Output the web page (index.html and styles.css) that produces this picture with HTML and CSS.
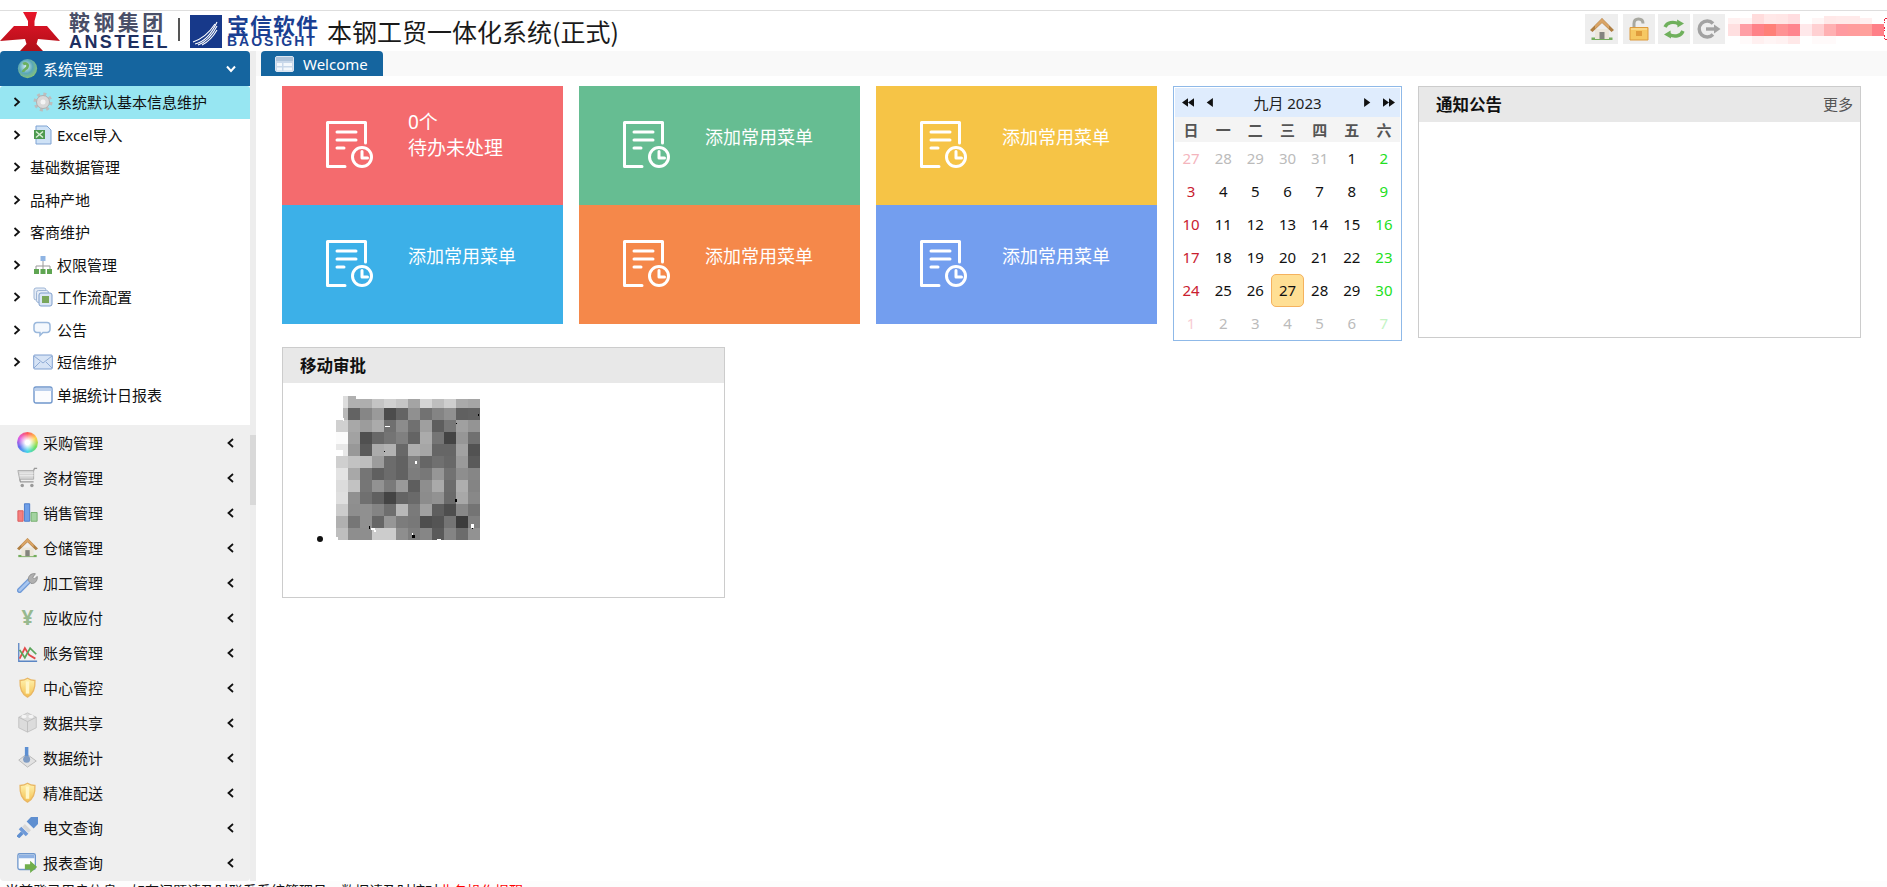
FILE: index.html
```html
<!DOCTYPE html>
<html lang="zh">
<head>
<meta charset="utf-8">
<title>本钢工贸一体化系统(正式)</title>
<link rel="stylesheet" href="styles.css">
</head>
<body>
<svg class="sprite" aria-hidden="true">
  <defs>
    <linearGradient id="gold" x1="0" y1="0" x2="0" y2="1"><stop offset="0" stop-color="#fff3b0"/><stop offset="1" stop-color="#f4c04f"/></linearGradient>
    <linearGradient id="redg" x1="0" y1="0" x2="0" y2="1"><stop offset="0" stop-color="#e8152a"/><stop offset="1" stop-color="#b00f18"/></linearGradient>
    <radialGradient id="globe" cx=".42" cy=".4" r=".65"><stop offset="0" stop-color="#d6eef5"/><stop offset=".55" stop-color="#5aa8b8"/><stop offset="1" stop-color="#8cc66e"/></radialGradient>
    <symbol id="doc" viewBox="0 0 47 47">
      <g fill="none" stroke="#fff" stroke-width="3" stroke-linecap="round" stroke-linejoin="round">
        <path d="M19 45.500H1.500V1.500H39.500V22"/>
        <path d="M11 11H30M11 19H30M11 27H18"/>
        <circle cx="36" cy="36" r="9.500"/>
        <path d="M36 30.500V37H41.500"/>
      </g>
    </symbol>
    <symbol id="home" viewBox="0 0 24 24">
      <path d="M1.500 20.500h21V23h-21z" fill="#74ad5c"/>
      <path d="M5 12h14v10H5z" fill="#ece7da"/>
      <path d="M9.500 15h5v7h-5z" fill="#84847e"/>
      <path d="M0 13 12 1l12 12-2.500 2L12 6 2.500 15z" fill="#b07f42"/>
      <path d="M12 1.500 5 8.500v3.500l7-6.500 7 6.500V8.500z" fill="#d9a466"/>
    </symbol>
    <symbol id="shield" viewBox="0 0 24 24">
      <path d="M12 1.500c2 1.500 5 2.500 8.500 2.500 .5 8-1 15-8.500 19C4.500 19 3 12 3.500 4 7 4 10 3 12 1.500z" fill="url(#gold)" stroke="#e9b765" stroke-width="1.500"/>
      <path d="M12 5v14" stroke="#fff6c8" stroke-width="4"/>
    </symbol>
  </defs>
</svg>

<div class="app">
  <header class="header">
    <div class="brand">
      <svg class="mark" viewBox="0 0 65 39"><path d="M23 0H37L34.500 9V14H47L60 29L38 27L36.500 32L43 39H20L26.500 32L25 27L0 29L14 14H28V9Z" fill="url(#redg)"/></svg>
      <div class="stack ansteel">
        <span class="cn">鞍钢集团</span>
        <span class="en">ANSTEEL</span>
      </div>
      <i class="divider"></i>
      <svg class="bird" viewBox="0 0 32 33">
        <path d="M0 0H32V33H0Z" fill="#17398a"/>
        <g stroke="#fff" stroke-width="1.100" fill="none">
          <path d="M5 29C14 27 21 20 27 7"/><path d="M8 30C16 27 22 21 27 11"/><path d="M3 27C12 24 19 18 25 9"/><path d="M12 30C18 27 23 22 27 15"/>
        </g>
      </svg>
      <div class="stack baosight">
        <span class="cn">宝信软件</span>
        <span class="en">BAOSIGHT</span>
      </div>
      <h1 class="title">本钢工贸一体化系统(正式)</h1>
    </div>
    <div class="tools">
      <button class="tool t-wide"><svg class="tool-icon"><use href="#home"/></svg></button>
      <button class="tool t-gap">
        <svg class="tool-icon" viewBox="0 0 24 24">
          <path d="M7 11V6.500C7 3 9 2 11.500 2S16 3 16 6.500" fill="none" stroke="#a8a8a0" stroke-width="3"/>
          <path d="M3 10.500h18V23H3z" fill="#f6c862" stroke="#dd9a3c"/>
          <path d="M9 14h6v5H9z" fill="#e09c3c"/><path d="M4 12h16" stroke="#fbe6ae"/>
        </svg>
      </button>
      <button class="tool">
        <svg class="tool-icon" viewBox="0 0 24 24" fill="none" stroke="#6fb05c" stroke-width="3.400">
          <path d="M3 10C5 5.500 11 4 17 7"/><path d="M21 14C19 19 13 20.500 7 17.500"/>
          <path d="M15 2.500l7 4-6.500 4z" fill="#6fb05c" stroke="none"/><path d="M9 21.500l-7-4 6.500-4z" fill="#6fb05c" stroke="none"/>
        </svg>
      </button>
      <button class="tool">
        <svg class="tool-icon" viewBox="0 0 24 24" fill="none" stroke="#a2a2a2" stroke-width="3.400">
          <path d="M16 6.500A8 8 0 1 0 16 17.500"/><path d="M9 12h9"/>
          <path d="M17 7.500l6.500 4.500-6.500 4.500z" fill="#a2a2a2" stroke="none"/>
        </svg>
      </button>
      <svg class="redact" viewBox="0 0 162 30" shape-rendering="crispEdges">
        <g transform="translate(3 0)">
          <rect x="0" y="4" class="c" fill="#fff0f0"/><rect x="12" y="4" class="c" fill="#fff5f5"/><rect x="24" y="0" class="c h" fill="#ffdcdc"/><rect x="36" y="0" class="c h" fill="#ffe8e8"/><rect x="48" y="0" class="c h" fill="#ffe6e6"/><rect x="60" y="0" class="c h" fill="#ffdde0"/><rect x="84" y="4" class="c" fill="#fff5f5"/><rect x="96" y="2" class="c" fill="#ffe8e8"/><rect x="108" y="2" class="c" fill="#ffeaea"/><rect x="120" y="2" class="c" fill="#ffeaea"/><rect x="132" y="4" class="c" fill="#fff0f0"/>
          <rect x="0" y="10" class="c" fill="#ffdfe0"/><rect x="12" y="10" class="c" fill="#ff9ea5"/><rect x="24" y="10" class="c" fill="#ff8288"/><rect x="36" y="10" class="c" fill="#ff8078"/><rect x="48" y="10" class="c" fill="#ff9294"/><rect x="60" y="10" class="c" fill="#ff858e"/><rect x="72" y="10" class="c" fill="#ffe8ea"/><rect x="84" y="10" class="c" fill="#ffd0d2"/><rect x="96" y="10" class="c" fill="#ffb0b2"/><rect x="108" y="10" class="c" fill="#ff9aa0"/><rect x="120" y="10" class="c" fill="#ff9c9c"/><rect x="132" y="10" class="c" fill="#ffa09c"/><rect x="144" y="10" class="c" fill="#ff8088"/>
          <rect x="12" y="22" class="c b" fill="#fffafa"/><rect x="24" y="22" class="c b" fill="#fff0f0"/><rect x="36" y="22" class="c b" fill="#fff5f5"/><rect x="48" y="22" class="c b" fill="#fff2f2"/><rect x="60" y="22" class="c b" fill="#ffe8e8"/><rect x="84" y="22" class="c b" fill="#fffafa"/><rect x="96" y="22" class="c b" fill="#fffafa"/>
        </g>
        <path d="M159 5v4M159 13v4M159 21v4M160 4h2M160 25h2" stroke="#f0203a" stroke-dasharray="2 1"/>
      </svg>
    </div>
  </header>

  <div class="body">
    <aside class="side">
      <nav class="side-menu">
        <div class="acc acc-open">
          <svg class="acc-icon" viewBox="0 0 24 24"><circle cx="12" cy="12" r="11" fill="url(#globe)"/><path d="M7 7c3-2 6 0 5 3s-5 3-5 6" fill="none" stroke="#6bb060" stroke-width="3"/></svg>
          <span class="acc-label">系统管理</span>
          <svg class="chev chev-down" viewBox="0 0 10 8"><path d="M1 1.500 5 6l4-4.500" fill="none" stroke="#fff" stroke-width="2"/></svg>
        </div>
        <div class="subs">
          <a class="sub sub-active"><svg class="chev-r" viewBox="0 0 8 10"><path d="M1.500 1 6 5 1.500 9" fill="none" stroke="#111" stroke-width="1.800"/></svg>
            <svg class="sub-icon" viewBox="0 0 20 20"><circle cx="10" cy="10" r="8" fill="none" stroke="#bdbdbd" stroke-width="3" stroke-dasharray="3 3.300"/><circle cx="10" cy="10" r="6.500" fill="#d8d8d8" stroke="#b0b0b0"/><circle cx="10" cy="10" r="2.500" fill="#f4f4f4"/></svg>
            系统默认基本信息维护</a>
          <a class="sub"><svg class="chev-r" viewBox="0 0 8 10"><path d="M1.500 1 6 5 1.500 9" fill="none" stroke="#111" stroke-width="1.800"/></svg>
            <svg class="sub-icon" viewBox="0 0 20 20"><path d="M3 1h11l4 4v14H3z" fill="#cfe2f6" stroke="#7ea3d3"/><path d="M1 5h11v9H1z" fill="#4d9a50"/><path d="M3 6.500 10 12.500M10 6.500 3 12.500" stroke="#d9efd4" stroke-width="1.500"/></svg>
            Excel导入</a>
          <a class="sub"><svg class="chev-r" viewBox="0 0 8 10"><path d="M1.500 1 6 5 1.500 9" fill="none" stroke="#111" stroke-width="1.800"/></svg>基础数据管理</a>
          <a class="sub"><svg class="chev-r" viewBox="0 0 8 10"><path d="M1.500 1 6 5 1.500 9" fill="none" stroke="#111" stroke-width="1.800"/></svg>品种产地</a>
          <a class="sub"><svg class="chev-r" viewBox="0 0 8 10"><path d="M1.500 1 6 5 1.500 9" fill="none" stroke="#111" stroke-width="1.800"/></svg>客商维护</a>
          <a class="sub"><svg class="chev-r" viewBox="0 0 8 10"><path d="M1.500 1 6 5 1.500 9" fill="none" stroke="#111" stroke-width="1.800"/></svg>
            <svg class="sub-icon" viewBox="0 0 20 20"><path d="M10 6v5M3 14v-3h14v3M10 11v3" fill="none" stroke="#999"/><path d="M7.500 1h5v5h-5z" fill="#8fb4e3"/><path d="M1 14h5v5H1zM7.500 14h5v5h-5zM14 14h5v5h-5z" fill="#5fa552"/></svg>
            权限管理</a>
          <a class="sub"><svg class="chev-r" viewBox="0 0 8 10"><path d="M1.500 1 6 5 1.500 9" fill="none" stroke="#111" stroke-width="1.800"/></svg>
            <svg class="sub-icon" viewBox="0 0 20 20"><rect x="1" y="1" width="12" height="12" rx="2" fill="#e5ecf6" stroke="#9fb6d6"/><rect x="3.500" y="3.500" width="12" height="12" rx="2" fill="#e5ecf6" stroke="#9fb6d6"/><rect x="6" y="6" width="13" height="13" rx="2" fill="#dbe6f5" stroke="#7f9ecb"/><path d="M9 9h7v7H9z" fill="#79a65a"/></svg>
            工作流配置</a>
          <a class="sub"><svg class="chev-r" viewBox="0 0 8 10"><path d="M1.500 1 6 5 1.500 9" fill="none" stroke="#111" stroke-width="1.800"/></svg>
            <svg class="sub-icon" viewBox="0 0 20 20"><path d="M4 2.500h10a3 3 0 0 1 3 3v4a3 3 0 0 1-3 3h-4l-3 3v-3H4a3 3 0 0 1-3-3v-4a3 3 0 0 1 3-3z" fill="#f4f8fd" stroke="#9ab8dc" stroke-width="1.500"/></svg>
            公告</a>
          <a class="sub"><svg class="chev-r" viewBox="0 0 8 10"><path d="M1.500 1 6 5 1.500 9" fill="none" stroke="#111" stroke-width="1.800"/></svg>
            <svg class="sub-icon" viewBox="0 0 20 20"><rect x=".7" y="3" width="18.600" height="14" rx="1" fill="#d6e3f5" stroke="#7f9fd0"/><path d="M1 4l9 7 9-7M1 16l6-6M19 16l-6-6" fill="none" stroke="#8fabd5"/></svg>
            短信维护</a>
          <a class="sub"><span class="chev-none"></span>
            <svg class="sub-icon" viewBox="0 0 20 20"><rect x="1" y="2" width="18" height="16" rx="2" fill="#fbfcfe" stroke="#7097cc" stroke-width="1.400"/><path d="M1.500 3h17v3h-17z" fill="#bcd0ec"/></svg>
            单据统计日报表</a>
        </div>
        <div class="acc"><span class="acc-icon wheel"></span><span class="acc-label">采购管理</span><svg class="chev" viewBox="0 0 8 10"><path d="M6 1 1.500 5 6 9" fill="none" stroke="#111" stroke-width="1.800"/></svg></div>
        <div class="acc"><svg class="acc-icon" viewBox="0 0 24 24"><path d="M1 4h18v10H3z" fill="#d4d4d4" stroke="#aaa"/><path d="M19 4l1-2.500h3M3 14l1 3h15" fill="none" stroke="#999" stroke-width="1.500"/><circle cx="6" cy="21" r="2" fill="#999"/><circle cx="17" cy="21" r="2" fill="#999"/><path d="M3 7h16M3 10h16" stroke="#f2f2f2"/></svg><span class="acc-label">资材管理</span><svg class="chev" viewBox="0 0 8 10"><path d="M6 1 1.500 5 6 9" fill="none" stroke="#111" stroke-width="1.800"/></svg></div>
        <div class="acc"><svg class="acc-icon" viewBox="0 0 24 24"><path d="M1 10h6v12H1z" fill="#f57f7f" stroke="#d95555"/><path d="M8.500 2h6v20h-6z" fill="#6f9fe8" stroke="#4274c6"/><path d="M16 12h7v10h-7z" fill="#a3d3a0" stroke="#6faa68"/></svg><span class="acc-label">销售管理</span><svg class="chev" viewBox="0 0 8 10"><path d="M6 1 1.500 5 6 9" fill="none" stroke="#111" stroke-width="1.800"/></svg></div>
        <div class="acc"><svg class="acc-icon"><use href="#home"/></svg><span class="acc-label">仓储管理</span><svg class="chev" viewBox="0 0 8 10"><path d="M6 1 1.500 5 6 9" fill="none" stroke="#111" stroke-width="1.800"/></svg></div>
        <div class="acc"><svg class="acc-icon" viewBox="0 0 24 24"><path d="M3 21 14 10" stroke="#6f9ad8" stroke-width="6" stroke-linecap="round"/><path d="M3 21 14 10" stroke="#a8c6ef" stroke-width="3" stroke-linecap="round"/><path d="M13 10c-1-5 3-9 8-8l-3 4 2 2 3-3c1 5-3 9-7 8z" fill="#b0b0b0" stroke="#8c8c8c"/></svg><span class="acc-label">加工管理</span><svg class="chev" viewBox="0 0 8 10"><path d="M6 1 1.500 5 6 9" fill="none" stroke="#111" stroke-width="1.800"/></svg></div>
        <div class="acc"><span class="acc-icon yen">¥</span><span class="acc-label">应收应付</span><svg class="chev" viewBox="0 0 8 10"><path d="M6 1 1.500 5 6 9" fill="none" stroke="#111" stroke-width="1.800"/></svg></div>
        <div class="acc"><svg class="acc-icon" viewBox="0 0 24 24" fill="none"><path d="M2 1v21h21" stroke="#5b86c4" stroke-width="1.500"/><path d="M3 19 9 7l5 8 7 4" stroke="#e34a4a" stroke-width="2"/><path d="M3 9l6 9 6-11 7 7" stroke="#5aa55a" stroke-width="2"/></svg><span class="acc-label">账务管理</span><svg class="chev" viewBox="0 0 8 10"><path d="M6 1 1.500 5 6 9" fill="none" stroke="#111" stroke-width="1.800"/></svg></div>
        <div class="acc"><svg class="acc-icon"><use href="#shield"/></svg><span class="acc-label">中心管控</span><svg class="chev" viewBox="0 0 8 10"><path d="M6 1 1.500 5 6 9" fill="none" stroke="#111" stroke-width="1.800"/></svg></div>
        <div class="acc"><svg class="acc-icon" viewBox="0 0 24 24"><path d="M12 1 22 6v12l-10 5-10-5V6z" fill="#dcdcdc" stroke="#c0c0c0"/><path d="M2 6l10 5 10-5M12 11v12" fill="none" stroke="#bbb"/><ellipse cx="8" cy="5" rx="3" ry="2" fill="#f4f4f4"/><ellipse cx="16" cy="5" rx="3" ry="2" fill="#f4f4f4"/></svg><span class="acc-label">数据共享</span><svg class="chev" viewBox="0 0 8 10"><path d="M6 1 1.500 5 6 9" fill="none" stroke="#111" stroke-width="1.800"/></svg></div>
        <div class="acc"><svg class="acc-icon" viewBox="0 0 24 24"><path d="M2 15l9-7 11 8-10 7z" fill="#e2e2e2" stroke="#b5b5b5"/><path d="M9 0h4v14H9z" fill="#5c8fd2"/><circle cx="11" cy="14" r="4" fill="#7f9cc4"/></svg><span class="acc-label">数据统计</span><svg class="chev" viewBox="0 0 8 10"><path d="M6 1 1.500 5 6 9" fill="none" stroke="#111" stroke-width="1.800"/></svg></div>
        <div class="acc"><svg class="acc-icon"><use href="#shield"/></svg><span class="acc-label">精准配送</span><svg class="chev" viewBox="0 0 8 10"><path d="M6 1 1.500 5 6 9" fill="none" stroke="#111" stroke-width="1.800"/></svg></div>
        <div class="acc"><svg class="acc-icon" viewBox="0 0 24 24"><path d="M1 23l5-5" stroke="#5f8fd0" stroke-width="4"/><path d="M5 11l8 8-3 3-8-8z" fill="#6f9ad8"/><path d="M9 8l7 7-3 3-7-7z" fill="#d8d8d8"/><path d="M11 5l8 8 5-5V0h-8z" fill="#5f8fd0"/></svg><span class="acc-label">电文查询</span><svg class="chev" viewBox="0 0 8 10"><path d="M6 1 1.500 5 6 9" fill="none" stroke="#111" stroke-width="1.800"/></svg></div>
        <div class="acc"><svg class="acc-icon" viewBox="0 0 24 24"><rect x="1" y="2" width="20" height="18" rx="2" fill="#fbfcfe" stroke="#6f97cc" stroke-width="1.500"/><path d="M2 3h18v4H2z" fill="#8fb2e3"/><path d="M9 14h6v-4l8 7-8 7v-4H9z" fill="#6fae4c"/></svg><span class="acc-label">报表查询</span><svg class="chev" viewBox="0 0 8 10"><path d="M6 1 1.500 5 6 9" fill="none" stroke="#111" stroke-width="1.800"/></svg></div>
      </nav>
      <div class="gutter"><i class="thumb"></i></div>
    </aside>

    <main class="main">
      <div class="tabbar">
        <div class="tab">
          <svg class="tab-icon" viewBox="0 0 19 16"><rect x=".5" y=".5" width="18" height="15" rx="1.500" fill="#c9d8ea" stroke="#dbe5f1"/><path d="M1 1h17v4H1z" fill="#aec3da"/><path d="M2 7h5v3H2zM2 11.500h5v3H2zM8.500 7h8.500v3H8.500zM8.500 11.500h8.500v3H8.500z" fill="#f4f8fc"/></svg>
          <span>Welcome</span>
        </div>
      </div>
      <div class="content">
        <div class="left">
          <div class="cards">
            <a class="card c-red"><svg class="card-icon"><use href="#doc"/></svg><span class="card-text card-text-lg">0个<br>待办未处理</span></a>
            <a class="card c-green"><svg class="card-icon"><use href="#doc"/></svg><span class="card-text">添加常用菜单</span></a>
            <a class="card c-yellow"><svg class="card-icon"><use href="#doc"/></svg><span class="card-text">添加常用菜单</span></a>
            <a class="card c-blue"><svg class="card-icon"><use href="#doc"/></svg><span class="card-text">添加常用菜单</span></a>
            <a class="card c-orange"><svg class="card-icon"><use href="#doc"/></svg><span class="card-text">添加常用菜单</span></a>
            <a class="card c-peri"><svg class="card-icon"><use href="#doc"/></svg><span class="card-text">添加常用菜单</span></a>
          </div>
          <section class="panel mobile">
            <h2 class="panel-head">移动审批</h2>
            <ul class="qr-list">
              <li>
                <svg class="qr" viewBox="0 0 144 144" shape-rendering="crispEdges">
                  <g><rect x="0" fill="#dddddd"/><rect x="12" fill="#b0b0b0"/><rect x="24" fill="#aeaeae"/><rect x="36" fill="#c4c4c4"/><rect x="48" fill="#d0d0d0"/><rect x="60" fill="#c5c5c5"/><rect x="72" fill="#a4a4a4"/><rect x="84" fill="#d4d4d4"/><rect x="96" fill="#bebebe"/><rect x="108" fill="#cecece"/><rect x="120" fill="#aaaaaa"/><rect x="132" fill="#a5a5a5"/></g>
                  <g transform="translate(0 12)"><rect x="0" fill="#b8b8b8"/><rect x="12" fill="#636363"/><rect x="24" fill="#868686"/><rect x="36" fill="#9a9a9a"/><rect x="48" fill="#4c4c4c"/><rect x="60" fill="#646464"/><rect x="72" fill="#909090"/><rect x="84" fill="#727272"/><rect x="96" fill="#848484"/><rect x="108" fill="#909090"/><rect x="120" fill="#606060"/><rect x="132" fill="#626262"/></g>
                  <g transform="translate(0 24)"><rect x="0" fill="#d0d0d0"/><rect x="12" fill="#a8a8a8"/><rect x="24" fill="#9c9c9c"/><rect x="36" fill="#ababab"/><rect x="48" fill="#707070"/><rect x="60" fill="#8c8c8c"/><rect x="72" fill="#707070"/><rect x="84" fill="#9f9f9f"/><rect x="96" fill="#5e5e5e"/><rect x="108" fill="#777777"/><rect x="120" fill="#a0a0a0"/><rect x="132" fill="#949494"/></g>
                  <g transform="translate(0 36)"><rect x="0" fill="#fbfbfb"/><rect x="12" fill="#a2a2a2"/><rect x="24" fill="#505050"/><rect x="36" fill="#686868"/><rect x="48" fill="#747474"/><rect x="60" fill="#808080"/><rect x="72" fill="#646464"/><rect x="84" fill="#ababab"/><rect x="96" fill="#757575"/><rect x="108" fill="#444444"/><rect x="120" fill="#969696"/><rect x="132" fill="#707070"/></g>
                  <g transform="translate(0 48)"><rect x="0" fill="#e8e8e8"/><rect x="12" fill="#989898"/><rect x="24" fill="#5a5a5a"/><rect x="36" fill="#ababab"/><rect x="48" fill="#b2b2b2"/><rect x="60" fill="#686868"/><rect x="72" fill="#aeaeae"/><rect x="84" fill="#a6a6a6"/><rect x="96" fill="#666666"/><rect x="108" fill="#666666"/><rect x="120" fill="#a2a2a2"/><rect x="132" fill="#525252"/></g>
                  <g transform="translate(0 60)"><rect x="0" fill="#cfcfcf"/><rect x="12" fill="#c2c2c2"/><rect x="24" fill="#bdbdbd"/><rect x="36" fill="#9c9c9c"/><rect x="48" fill="#6c6c6c"/><rect x="60" fill="#626262"/><rect x="72" fill="#808080"/><rect x="84" fill="#666666"/><rect x="96" fill="#707070"/><rect x="108" fill="#686868"/><rect x="120" fill="#9a9a9a"/><rect x="132" fill="#5a5a5a"/></g>
                  <g transform="translate(0 72)"><rect x="0" fill="#e3e3e3"/><rect x="12" fill="#a8a8a8"/><rect x="24" fill="#757575"/><rect x="36" fill="#606060"/><rect x="48" fill="#6c6c6c"/><rect x="60" fill="#626262"/><rect x="72" fill="#7d7d7d"/><rect x="84" fill="#787878"/><rect x="96" fill="#969696"/><rect x="108" fill="#727272"/><rect x="120" fill="#8e8e8e"/><rect x="132" fill="#868686"/></g>
                  <g transform="translate(0 84)"><rect x="0" fill="#dcdcdc"/><rect x="12" fill="#c2c2c2"/><rect x="24" fill="#767676"/><rect x="36" fill="#929292"/><rect x="48" fill="#7a7a7a"/><rect x="60" fill="#9a9a9a"/><rect x="72" fill="#5e5e5e"/><rect x="84" fill="#8e8e8e"/><rect x="96" fill="#aaaaaa"/><rect x="108" fill="#6c6c6c"/><rect x="120" fill="#aeaeae"/><rect x="132" fill="#848484"/></g>
                  <g transform="translate(0 96)"><rect x="0" fill="#dfdfdf"/><rect x="12" fill="#909090"/><rect x="24" fill="#707070"/><rect x="36" fill="#606060"/><rect x="48" fill="#444444"/><rect x="60" fill="#646464"/><rect x="72" fill="#6a6a6a"/><rect x="84" fill="#8c8c8c"/><rect x="96" fill="#929292"/><rect x="108" fill="#6a6a6a"/><rect x="120" fill="#a8a8a8"/><rect x="132" fill="#888888"/></g>
                  <g transform="translate(0 108)"><rect x="0" fill="#cccccc"/><rect x="12" fill="#8e8e8e"/><rect x="24" fill="#909090"/><rect x="36" fill="#848484"/><rect x="48" fill="#6e6e6e"/><rect x="60" fill="#b8b8b8"/><rect x="72" fill="#7a7a7a"/><rect x="84" fill="#a0a0a0"/><rect x="96" fill="#5e5e5e"/><rect x="108" fill="#4e4e4e"/><rect x="120" fill="#888888"/><rect x="132" fill="#747474"/></g>
                  <g transform="translate(0 120)"><rect x="0" fill="#b0b0b0"/><rect x="12" fill="#767676"/><rect x="24" fill="#909090"/><rect x="36" fill="#666666"/><rect x="48" fill="#969696"/><rect x="60" fill="#7c7c7c"/><rect x="72" fill="#787878"/><rect x="84" fill="#4e4e4e"/><rect x="96" fill="#545454"/><rect x="108" fill="#747474"/><rect x="120" fill="#3c3c3c"/><rect x="132" fill="#808080"/></g>
                  <g transform="translate(0 132)"><rect x="0" fill="#bebebe"/><rect x="12" fill="#8e8e8e"/><rect x="24" fill="#8e8e8e"/><rect x="36" fill="#cccccc"/><rect x="48" fill="#cccccc"/><rect x="60" fill="#8e8e8e"/><rect x="72" fill="#7e7e7e"/><rect x="84" fill="#868686"/><rect x="96" fill="#5a5a5a"/><rect x="108" fill="#848484"/><rect x="120" fill="#6c6c6c"/><rect x="132" fill="#929292"/></g>
                  <path d="M0 0h7v24H0zM7 22h1v3H7zM20 0h124v3H20zM0 54h7v6H0zM0 141h2v3H0zM101 143h4v1h-4zM49 30h5v1h-5zM79 65h2v3h-2zM35 132h4v2h-4zM38 134h2v2h-2zM135 128h3v4h-3zM76 137h1v2h-1z" fill="#fff"/>
                  <path d="M142 18h1v2h-1zM120 27h1v1h-1zM48 55h1v1h-1zM119 103h2v3h-2zM33 130h1v3h-1zM136 132h1v1h-1zM76 139h3v3h-3z" fill="#000"/>
                </svg>
              </li>
            </ul>
          </section>
        </div>

        <section class="calendar">
          <div class="cal-head">
            <span class="cal-nav">
              <svg class="nav-d" viewBox="0 0 11 8"><path d="M5.500 0v8L0 4zM11 0v8L5.500 4z"/></svg>
              <svg class="nav-s" viewBox="0 0 6 8"><path d="M6 0v8L.5 4z"/></svg>
            </span>
            <span class="cal-title">九月 2023</span>
            <span class="cal-nav">
              <svg class="nav-s" viewBox="0 0 6 8"><path d="M0 0v8l5.500-4z"/></svg>
              <svg class="nav-d" viewBox="0 0 11 8"><path d="M0 0v8l5.500-4zM5.500 0v8L11 4z"/></svg>
            </span>
          </div>
          <div class="cal-week"><span>日</span><span>一</span><span>二</span><span>三</span><span>四</span><span>五</span><span>六</span></div>
          <div class="cal-days">
            <span class="sun-o">27</span><span class="o">28</span><span class="o">29</span><span class="o">30</span><span class="o">31</span><span>1</span><span class="sat">2</span>
            <span class="sun">3</span><span>4</span><span>5</span><span>6</span><span>7</span><span>8</span><span class="sat">9</span>
            <span class="sun">10</span><span>11</span><span>12</span><span>13</span><span>14</span><span>15</span><span class="sat">16</span>
            <span class="sun">17</span><span>18</span><span>19</span><span>20</span><span>21</span><span>22</span><span class="sat">23</span>
            <span class="sun">24</span><span>25</span><span>26</span><span class="today">27</span><span>28</span><span>29</span><span class="sat">30</span>
            <span class="sun-n">1</span><span class="o">2</span><span class="o">3</span><span class="o">4</span><span class="o">5</span><span class="o">6</span><span class="sat-n">7</span>
          </div>
        </section>

        <section class="panel notice">
          <div class="panel-head notice-head"><h2 class="notice-title">通知公告</h2><a class="more">更多</a></div>
        </section>
      </div>
    </main>
  </div>
  <footer class="foot">当前登录用户信息，如有问题请及时联系系统管理员，数据请及时核对<span class="warn">业务操作提醒</span></footer>
</div>
</body>
</html>
```

FILE: styles.css
```css
* { box-sizing: border-box; }
html, body { margin: 0; height: 100%; overflow: hidden; background: #fff; }
body { font-family: "Noto Sans", "Noto Sans CJK SC", sans-serif; color: #111; font-size: 15px; }
.sprite { display: block; width: 0; height: 0; }

.app { height: 887px; display: flex; flex-direction: column; overflow: hidden; }

/* header */
.header { margin-top: 10px; height: 41px; border-top: 1px solid #dedede; display: flex; justify-content: space-between; flex: none; }
.brand { display: flex; align-items: flex-start; }
.mark { width: 65px; height: 39px; margin: 1px 0 0 0; flex: none; }
.stack { display: flex; flex-direction: column; white-space: nowrap; }
.ansteel { margin: 0 0 0 4px; width: 100px; }
.ansteel .cn { font: 700 21px/21px "Noto Sans CJK SC", sans-serif; letter-spacing: 3.4px; color: #4a4f68; }
.ansteel .en { margin-top: 2px; font: 700 18px/17px "Liberation Sans", sans-serif; letter-spacing: 2.4px; color: #1e2f60; }
.divider { width: 2px; height: 23px; margin: 7px 10px 0 9px; background: #555; flex: none; }
.bird { width: 32px; height: 33px; margin-top: 4px; flex: none; }
.baosight { margin: 2px 0 0 5px; width: 94px; }
.baosight .cn { font: 700 22px/22px "Noto Sans CJK SC", sans-serif; letter-spacing: 1px; color: #1a3f92; }
.baosight .en { font: 700 14px/13px "Liberation Sans", sans-serif; letter-spacing: 2px; color: #1a3f92; }
.title { margin: 3px 0 0 6px; font: 400 25px/34px "Noto Sans CJK SC", sans-serif; color: #1a1a1a; white-space: nowrap; }

.tools { display: flex; align-items: flex-start; padding-top: 3px; }
.tool { width: 32px; height: 30px; margin: 0 3px 0 0; padding: 0; border: 0; background: #eee; display: flex; align-items: center; justify-content: center; }
.t-wide { width: 33px; margin-right: 5px; }
.t-gap { margin-right: 3px; }
.tool-icon { width: 24px; height: 24px; }
.redact { width: 162px; height: 30px; margin-left: -3px; flex: none; }
.redact .c { width: 12px; height: 12px; }
.redact .h { height: 10px; }
.redact .b { height: 8px; }

/* body */
.body { flex: 1; display: flex; min-height: 0; }
.side { width: 256px; flex: none; display: flex; }
.side-menu { width: 250px; background: #efefef; border-radius: 4px; overflow: hidden; }
.gutter { width: 6px; background: #ededed; padding-top: 384px; }
.thumb { display: block; height: 70px; background: #d9d9d9; }

.acc { height: 35px; display: flex; align-items: center; padding: 0 14px 0 17px; font-size: 15px; line-height: 20px; color: #111; }
.acc-open { background: #15659f; color: #fff; }
.acc-icon { width: 21px; height: 21px; flex: none; }
.acc-label { flex: 1; margin-left: 5px; }
.chev { width: 8px; height: 10px; flex: none; margin-right: 1px; }
.chev-down { width: 10px; height: 8px; margin-right: 0; }
.wheel { border-radius: 50%; background: radial-gradient(circle, #fff 15%, rgba(255,255,255,0) 60%), conic-gradient(#ff5b5b, #ffd24d, #6fe05c, #46d6e8, #5d6ff0, #e25be0, #ff5b5b); }
.yen { color: #97b98f; font-weight: 700; font-size: 21px; line-height: 21px; text-align: center; }

.subs { background: #fff; height: 339px; }
.sub { height: 32.5px; display: flex; align-items: center; padding-left: 13px; color: #111; font-size: 15px; line-height: 20px; white-space: nowrap; }
.sub-active { background: #97e6f2; border-radius: 3px 3px 0 0; }
.chev-r { width: 8px; height: 10px; flex: none; margin-right: 9px; }
.chev-none { width: 8px; flex: none; margin-right: 9px; }
.sub-icon { width: 20px; height: 20px; margin: 0 4px 0 3px; flex: none; }

/* main */
.main { flex: 1; min-width: 0; }
.tabbar { height: 25px; padding-left: 5px; background: #f9f9f9; }
.tab { width: 122px; height: 25px; padding-left: 14px; display: flex; align-items: center; gap: 9px; background: #15659f; color: #fff; font-size: 15px; line-height: 20px; border-radius: 4px 4px 0 0; }
.tab-icon { width: 19px; height: 16px; }

.content { display: flex; align-items: flex-start; gap: 16px; padding: 10px 26px 0; }
.left { width: 875px; flex: none; }
.cards { display: grid; grid-template-columns: repeat(3, 281px); grid-auto-rows: 119px; column-gap: 16px; }
.card { display: flex; align-items: center; padding: 0 0 18px 44px; color: #fff; }
.card-icon { width: 47px; height: 47px; margin: 16px 35px 0 0; flex: none; }
.card-text { font-size: 18px; line-height: 26px; }
.card-text-lg { font-size: 19px; margin-bottom: 4px; }
.c-red { background: #f46b6e; }
.c-green { background: #66bd92; }
.c-yellow { background: #f6c446; }
.c-blue { background: #3cb0e8; }
.c-orange { background: #f5884a; }
.c-peri { background: #739eef; }

.panel { border: 1px solid #ccc; background: #fff; }
.panel-head { margin: 0; height: 35px; background: #e8e8e8; padding-left: 17px; font-size: 16.5px; font-weight: 700; line-height: 35px; color: #111; }
.mobile { margin-top: 23px; width: 443px; height: 251px; }
.qr-list { margin: 13px 0 0; padding: 0 0 0 53px; font-size: 17px; line-height: 20px; }
.qr { width: 144px; height: 144px; display: inline-block; vertical-align: 5px; }
.qr rect { width: 12px; height: 12px; }

.calendar { width: 229px; height: 255px; flex: none; border: 1px solid #8fb9e8; padding: 1px; background: #fff; }
.cal-head { height: 29px; background: #dfecfd; display: flex; align-items: center; justify-content: space-between; padding: 0 7px; }
.cal-nav { display: flex; align-items: center; gap: 12px; width: 29px; }
.cal-nav svg { flex: none; fill: #111; }
.nav-d { width: 12px; height: 9px; }
.nav-s { width: 7px; height: 9px; }
.cal-title { font-size: 15px; line-height: 20px; color: #222; }
.cal-week { height: 25px; display: grid; grid-template-columns: repeat(7, 1fr); background: #f4f4f4; text-align: center; font: 700 15px/25px "Noto Sans CJK SC", sans-serif; color: #555; }
.cal-days { display: grid; grid-template-columns: repeat(7, 1fr); grid-auto-rows: 33px; font-size: 15px; text-align: center; line-height: 33px; color: #111; }
.cal-days .o { color: #bbb; }
.cal-days .sat { color: #22e022; }
.cal-days .sun { color: #c9202f; }
.cal-days .sun-o { color: #f4b5bd; }
.cal-days .sun-n { color: #f7ccd3; }
.cal-days .sat-n { color: #c4f4c4; }
.cal-days .today { background: #ffdf94; border: 1px solid #f5b25e; border-radius: 5px; line-height: 31px; }

.notice { flex: 1; height: 252px; }
.notice-head { display: flex; justify-content: space-between; padding: 0 7px 0 17px; }
.notice-title { margin: 0; font: inherit; }
.more { font-size: 15px; font-weight: 400; color: #555; }

.foot { height: 6px; flex: none; overflow: hidden; background: #fdfdfd; padding: 3px 0 0 5px; font-size: 14px; line-height: 14px; white-space: nowrap; color: #111; }
.warn { color: #f00; }
```
